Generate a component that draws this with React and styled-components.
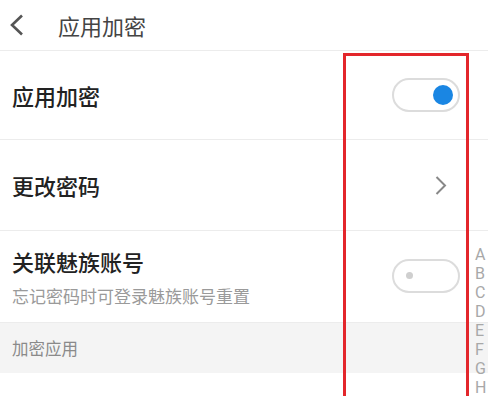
import React from 'react';
import styled, { createGlobalStyle } from 'styled-components';

const GlobalStyle = createGlobalStyle`
  html, body {
    margin: 0;
    padding: 0;
    background: #fff;
  }
  body {
    font-family: "Noto Sans CJK SC", "Noto Sans", sans-serif;
    overflow: hidden;
  }
`;

const Page = styled.div`
  position: relative;
  width: 488px;
  height: 396px;
  overflow: hidden;
  background: #fff;
`;

const Header = styled.div`
  display: flex;
  align-items: center;
  height: 50px;
  padding-left: 9px;
  border-bottom: 1px solid #ececec;
`;

const HeaderTitle = styled.div`
  margin-left: 33px;
  font-size: 22px;
  color: #444;
  line-height: 1;
`;

const Row = styled.div`
  display: flex;
  align-items: center;
  justify-content: space-between;
  height: ${(props) => props.height}px;
  padding: 0 0 0 12px;
  border-bottom: 1px solid #ececec;
  box-sizing: border-box;
`;

const Texts = styled.div`
  display: flex;
  flex-direction: column;
  gap: 15px;
`;

const Title = styled.div`
  font-size: 22px;
  font-weight: 500;
  color: #222;
  line-height: 1;
`;

const Sub = styled.div`
  font-size: 17px;
  color: #9a9a9a;
  line-height: 1;
`;

const Toggle = styled.div`
  width: 68px;
  height: 34px;
  margin-right: 28px;
  border: 2px solid #dcdcdc;
  border-radius: 17px;
  display: flex;
  align-items: center;
  justify-content: ${(props) => (props.on ? 'flex-end' : 'flex-start')};
  padding: 0 ${(props) => (props.on ? '5px' : '12px')};
  box-sizing: border-box;
  margin-top: ${(props) => props.offset || 0}px;
`;

const Knob = styled.div`
  width: ${(props) => (props.on ? 20 : 7)}px;
  height: ${(props) => (props.on ? 20 : 7)}px;
  border-radius: 50%;
  background: ${(props) => (props.on ? '#1a86e3' : '#cfcfcf')};
`;

const Chevron = styled.svg`
  margin-right: 41px;
`;

const Section = styled.div`
  height: 50px;
  display: flex;
  align-items: center;
  padding-left: 12px;
  background: #f4f4f4;
  font-size: 16.5px;
  color: #8a8a8a;
`;

const Highlight = styled.div`
  position: absolute;
  left: 343px;
  top: 53px;
  width: 120px;
  height: 360px;
  border: 3px solid #e3262b;
`;

const IndexBar = styled.div`
  position: absolute;
  left: 475px;
  top: 245px;
  display: flex;
  flex-direction: column;
  font-family: Roboto, "Liberation Sans", sans-serif;
  font-size: 16px;
  line-height: 19px;
  color: #a8a8a8;
`;

const letters = ['A', 'B', 'C', 'D', 'E', 'F', 'G', 'H'];

export default function App() {
  return (
    <Page>
      <GlobalStyle />
      <Header>
        <svg width="16" height="22" viewBox="0 0 16 22">
          <path d="M13 1.5 L3 11 L13 20.5" fill="none" stroke="#555" strokeWidth="2.6" />
        </svg>
        <HeaderTitle>应用加密</HeaderTitle>
      </Header>
      <Row height={89}>
        <Title>应用加密</Title>
        <Toggle on>
          <Knob on />
        </Toggle>
      </Row>
      <Row height={91}>
        <Title>更改密码</Title>
        <Chevron width="12" height="19" viewBox="0 0 12 19">
          <path d="M1.5 1 L10 9.5 L1.5 18" fill="none" stroke="#888" strokeWidth="2" />
        </Chevron>
      </Row>
      <Row height={92}>
        <Texts>
          <Title>关联魅族账号</Title>
          <Sub>忘记密码时可登录魅族账号重置</Sub>
        </Texts>
        <Toggle offset={-2}>
          <Knob />
        </Toggle>
      </Row>
      <Section>加密应用</Section>
      <Highlight />
      <IndexBar>
        {letters.map((l) => (
          <span key={l}>{l}</span>
        ))}
      </IndexBar>
    </Page>
  );
}
